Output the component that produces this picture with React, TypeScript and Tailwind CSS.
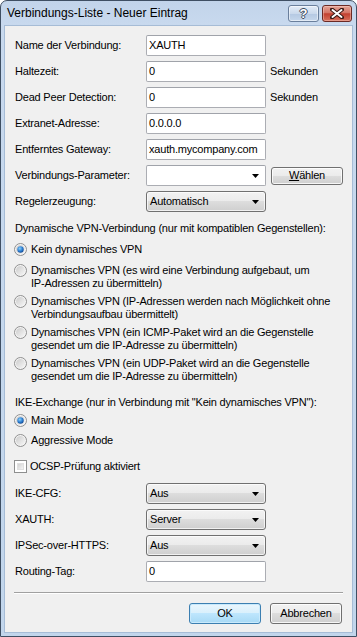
import React from "react";

const FONT = { fontFamily: '"Liberation Sans", Arial, sans-serif' };

function TextBox({ value }: { value: string }) {
  return (
    <div className="w-[120px] h-[21px] bg-white border border-[#abadb3] border-t-[#a0a3aa] rounded-[2px] flex items-center pl-[2px] text-[11px] text-black">
      {value}
    </div>
  );
}

function Arrow() {
  return (
    <svg width="7" height="4" viewBox="0 0 7 4" className="shrink-0">
      <path d="M0 0 H7 L3.5 4 Z" fill="#000" />
    </svg>
  );
}

function Dropdown({ value }: { value: string }) {
  return (
    <div className="w-[120px] h-[21px] border border-[#707070] rounded-[3px] bg-[linear-gradient(#f2f2f2_0%,#ebebeb_49%,#dddddd_50%,#cfcfcf_100%)] flex items-center justify-between pl-[3px] pr-[6px] text-[11px] shadow-[inset_0_0_0_1px_rgba(255,255,255,0.7)]">
      <span>{value}</span>
      <Arrow />
    </div>
  );
}

function EditCombo() {
  return (
    <div className="w-[120px] h-[21px] bg-white border border-[#abadb3] border-t-[#a0a3aa] rounded-[2px] flex items-center justify-end pr-[6px]">
      <Arrow />
    </div>
  );
}

function Button({
  children,
  def,
  className = "",
}: {
  children: React.ReactNode;
  def?: boolean;
  className?: string;
}) {
  return (
    <div
      className={
        "rounded-[3px] border flex items-center justify-center text-[11px] " +
        (def
          ? "border-[#3c7fb1] bg-[linear-gradient(#eaf6fd_0%,#d9f0fc_49%,#bee6fd_50%,#a7d9f5_100%)] shadow-[inset_0_0_0_1px_#c9eafc]"
          : "border-[#707070] bg-[linear-gradient(#f2f2f2_0%,#ebebeb_49%,#dddddd_50%,#cfcfcf_100%)] shadow-[inset_0_0_0_1px_rgba(255,255,255,0.8)]") +
        " " +
        className
      }
    >
      {children}
    </div>
  );
}

function Radio({ checked }: { checked?: boolean }) {
  return (
    <svg width="13" height="13" viewBox="0 0 13 13" className="shrink-0">
      <defs>
        <linearGradient id="rg" x1="0" y1="0" x2="1" y2="1">
          <stop offset="0" stopColor="#cbcbcb" />
          <stop offset="1" stopColor="#f7f7f7" />
        </linearGradient>
        <radialGradient id="rd" cx="0.4" cy="0.35" r="0.7">
          <stop offset="0" stopColor="#8ad2fb" />
          <stop offset="0.6" stopColor="#2a7bcf" />
          <stop offset="1" stopColor="#10438a" />
        </radialGradient>
      </defs>
      <circle cx="6.5" cy="6.5" r="6" fill="#f4f4f4" stroke="#8f8f8f" strokeWidth="1" />
      <circle cx="6.5" cy="6.5" r="4.5" fill="url(#rg)" />
      {checked && <circle cx="6.5" cy="6.5" r="3.2" fill="url(#rd)" />}
    </svg>
  );
}

function RadioItem({
  checked,
  lines,
  className = "",
}: {
  checked?: boolean;
  lines: string[];
  className?: string;
}) {
  return (
    <div className={"flex items-start pl-[9px] " + className}>
      <Radio checked={checked} />
      <div className="ml-[4px] text-[11px] leading-[13px]">
        {lines.map((l, i) => (
          <div key={i}>{l}</div>
        ))}
      </div>
    </div>
  );
}

function Row({ label, children }: { label: string; children: React.ReactNode }) {
  return (
    <div className="flex items-center h-[21px]">
      <div className="w-[141px] pl-[10px] text-[11px] shrink-0">{label}</div>
      {children}
    </div>
  );
}

export default function App() {
  return (
    <div
      className="w-[357px] h-[637px] bg-white text-black tracking-[-0.2px]"
      style={FONT}
    >
      <div className="w-full h-full flex flex-col rounded-t-[7px] border border-[#3f4f63] bg-[linear-gradient(#c2d4ea_0px,#c8d9ee_24px,#c2d6ec_100%)] px-[3px] pb-[3px]">
        {/* title bar */}
        <div className="h-[24px] flex items-start justify-between shrink-0">
          <div className="pl-[3px] pt-[5px] text-[12px] leading-[15px] tracking-[0px] text-black">
            Verbindungs-Liste - Neuer Eintrag
          </div>
          <div className="flex gap-[3px] pt-[4px] pr-[1px]">
            <div className="w-[31px] h-[17px] rounded-[3px] border border-[#6a7f9c] bg-[linear-gradient(#e3ecf7_0%,#cad9ec_50%,#b4c8e2_51%,#c6d7ec_100%)] flex items-center justify-center shadow-[inset_0_0_0_1px_rgba(255,255,255,0.5)]">
              <span
                className="text-[13px] font-bold leading-none text-white tracking-[0px]"
                style={{
                  textShadow:
                    "1px 0 0 #3b4a5e, -1px 0 0 #3b4a5e, 0 1px 0 #3b4a5e, 0 -1px 0 #3b4a5e",
                }}
              >
                ?
              </span>
            </div>
            <div className="w-[30px] h-[17px] rounded-[3px] border border-[#6b2a25] bg-[linear-gradient(#e3a497_0%,#d47566_45%,#c2402f_52%,#d7705c_100%)] flex items-center justify-center shadow-[inset_0_0_0_1px_rgba(255,220,210,0.4)]">
              <svg width="14" height="11" viewBox="0 0 14 11">
                <path
                  d="M2 1.5 L12 9.5 M12 1.5 L2 9.5"
                  stroke="#3a1a16"
                  strokeWidth="4"
                  strokeLinecap="round"
                />
                <path
                  d="M2.5 2 L11.5 9 M11.5 2 L2.5 9"
                  stroke="#ffffff"
                  strokeWidth="2"
                  strokeLinecap="round"
                />
              </svg>
            </div>
          </div>
        </div>

        {/* client */}
        <div className="flex-1 bg-[#f0f0f0] border border-[#a6bcd6] flex flex-col pt-[9px] text-[11px]">
          <div className="flex flex-col gap-[5px]">
            <Row label="Name der Verbindung:">
              <TextBox value="XAUTH" />
            </Row>
            <Row label="Haltezeit:">
              <TextBox value="0" />
              <span className="ml-[4px]">Sekunden</span>
            </Row>
            <Row label="Dead Peer Detection:">
              <TextBox value="0" />
              <span className="ml-[4px]">Sekunden</span>
            </Row>
            <Row label="Extranet-Adresse:">
              <TextBox value="0.0.0.0" />
            </Row>
            <Row label="Entferntes Gateway:">
              <TextBox value="xauth.mycompany.com" />
            </Row>
            <Row label="Verbindungs-Parameter:">
              <EditCombo />
              <Button className="ml-[5px] w-[72px] h-[18px]">
                <span>
                  <span className="underline">W</span>ählen
                </span>
              </Button>
            </Row>
            <Row label="Regelerzeugung:">
              <Dropdown value="Automatisch" />
            </Row>
          </div>

          <div className="mt-[10px] pl-[10px] leading-[13px]">
            Dynamische VPN-Verbindung (nur mit kompatiblen Gegenstellen):
          </div>
          <RadioItem className="mt-[8px]" checked lines={["Kein dynamisches VPN"]} />
          <RadioItem
            className="mt-[8px]"
            lines={[
              "Dynamisches VPN (es wird eine Verbindung aufgebaut, um",
              "IP-Adressen zu übermitteln)",
            ]}
          />
          <RadioItem
            className="mt-[5px]"
            lines={[
              "Dynamisches VPN (IP-Adressen werden nach Möglichkeit ohne",
              "Verbindungsaufbau übermittelt)",
            ]}
          />
          <RadioItem
            className="mt-[5px]"
            lines={[
              "Dynamisches VPN (ein ICMP-Paket wird an die Gegenstelle",
              "gesendet um die IP-Adresse zu übermitteln)",
            ]}
          />
          <RadioItem
            className="mt-[5px]"
            lines={[
              "Dynamisches VPN (ein UDP-Paket wird an die Gegenstelle",
              "gesendet um die IP-Adresse zu übermitteln)",
            ]}
          />

          <div className="mt-[13px] pl-[10px] leading-[13px]">
            IKE-Exchange (nur in Verbindung mit "Kein dynamisches VPN"):
          </div>
          <RadioItem className="mt-[5px]" checked lines={["Main Mode"]} />
          <RadioItem className="mt-[7px]" lines={["Aggressive Mode"]} />

          <div className="mt-[13px] pl-[9px] flex items-center h-[13px]">
            <div className="w-[13px] h-[13px] border border-[#8e8f8f] bg-white p-[2px] shrink-0">
              <div className="w-full h-full bg-[linear-gradient(135deg,#d2d2d2,#f4f4f4)] border border-[#e0e0e0]" />
            </div>
            <span className="ml-[3px]">OCSP-Prüfung aktiviert</span>
          </div>

          <div className="mt-[10px] flex flex-col gap-[5px]">
            <Row label="IKE-CFG:">
              <Dropdown value="Aus" />
            </Row>
            <Row label="XAUTH:">
              <Dropdown value="Server" />
            </Row>
            <Row label="IPSec-over-HTTPS:">
              <Dropdown value="Aus" />
            </Row>
            <Row label="Routing-Tag:">
              <TextBox value="0" />
            </Row>
          </div>

          <div className="mt-[10px] mx-[9px] border-t border-[#a0a0a0] border-b border-b-white" />

          <div className="mt-[9px] flex justify-end gap-[9px] pr-[10px]">
            <Button def className="w-[72px] h-[21px]">
              OK
            </Button>
            <Button className="w-[72px] h-[21px]">Abbrechen</Button>
          </div>
        </div>
      </div>
    </div>
  );
}
